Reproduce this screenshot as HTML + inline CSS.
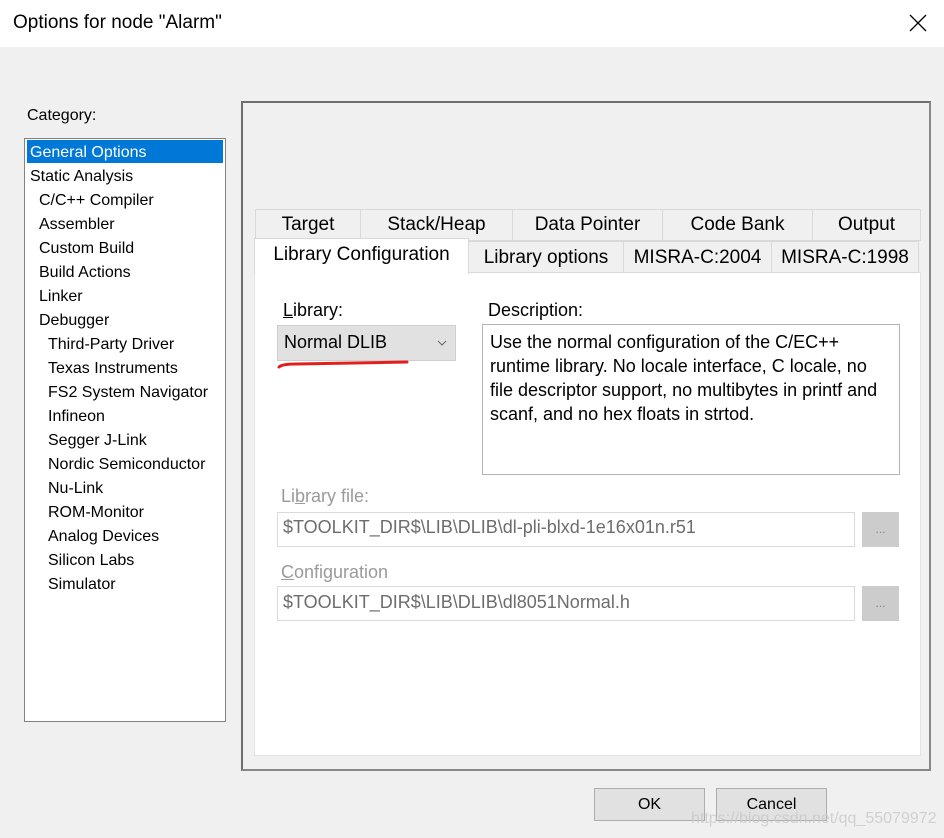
<!DOCTYPE html>
<html><head><meta charset="utf-8"><style>
*{margin:0;padding:0;box-sizing:border-box}
body{width:944px;height:838px;background:#f0f0f0;font-family:"Liberation Sans",sans-serif;position:relative;overflow:hidden;color:#000}
.a{position:absolute}
.t{font-size:18px}
.tab{position:absolute;background:#f0f0f0;border:1px solid #d9d9d9;font-size:19px;text-align:center;line-height:30px}
.li{position:absolute;font-size:16px;line-height:24px}
</style></head><body>
<div class="a" style="left:0;top:0;width:944px;height:47px;background:#fff"></div>
<div class="a" style="left:13px;top:12px;font-size:19px">Options for node "Alarm"</div>
<svg class="a" style="left:909px;top:14px" width="18" height="18"><path d="M1 1L17 17M17 1L1 17" stroke="#000" stroke-width="1.3"/></svg>
<div class="a" style="left:27px;top:107px;font-size:16px">Category:</div>
<div class="a" style="left:24px;top:138px;width:202px;height:584px;background:#fff;border:1px solid #828282"></div>
<div class="a" style="left:27px;top:140px;width:196px;height:23px;background:#0078d7"></div>
<div class="li" style="left:30px;top:141px;color:#fff">General Options</div>
<div class="li" style="left:30px;top:165px">Static Analysis</div>
<div class="li" style="left:39px;top:189px">C/C++ Compiler</div>
<div class="li" style="left:39px;top:213px">Assembler</div>
<div class="li" style="left:39px;top:237px">Custom Build</div>
<div class="li" style="left:39px;top:261px">Build Actions</div>
<div class="li" style="left:39px;top:285px">Linker</div>
<div class="li" style="left:39px;top:309px">Debugger</div>
<div class="li" style="left:48px;top:333px">Third-Party Driver</div>
<div class="li" style="left:48px;top:357px">Texas Instruments</div>
<div class="li" style="left:48px;top:381px">FS2 System Navigator</div>
<div class="li" style="left:48px;top:405px">Infineon</div>
<div class="li" style="left:48px;top:429px">Segger J-Link</div>
<div class="li" style="left:48px;top:453px">Nordic Semiconductor</div>
<div class="li" style="left:48px;top:477px">Nu-Link</div>
<div class="li" style="left:48px;top:501px">ROM-Monitor</div>
<div class="li" style="left:48px;top:525px">Analog Devices</div>
<div class="li" style="left:48px;top:549px">Silicon Labs</div>
<div class="li" style="left:48px;top:573px">Simulator</div>

<div class="a" style="left:241px;top:101px;width:690px;height:670px;border:2px solid #6e6e6e;border-right-color:#888;border-bottom-color:#888"></div>
<div class="a" style="left:254px;top:272px;width:667px;height:484px;background:#fff;border:1px solid #e3e3e3"></div>
<div class="tab" style="left:255px;top:209px;width:106px;height:32px">Target</div>
<div class="tab" style="left:360px;top:209px;width:153px;height:32px">Stack/Heap</div>
<div class="tab" style="left:512px;top:209px;width:151px;height:32px">Data Pointer</div>
<div class="tab" style="left:662px;top:209px;width:151px;height:32px">Code Bank</div>
<div class="tab" style="left:812px;top:209px;width:109px;height:32px">Output</div>
<div class="tab" style="left:468px;top:241px;width:156px;height:32px;line-height:32px">Library options</div>
<div class="tab" style="left:623px;top:241px;width:149px;height:32px;line-height:32px">MISRA-C:2004</div>
<div class="tab" style="left:771px;top:241px;width:148px;height:32px;line-height:32px">MISRA-C:1998</div>
<div class="tab" style="left:254px;top:238px;width:215px;height:36px;background:#fff;border-bottom:none;line-height:32px">Library Configuration</div>

<div class="a t" style="left:283px;top:300px"><u>L</u>ibrary:</div>
<div class="a t" style="left:488px;top:300px">Description:</div>
<div class="a" style="left:277px;top:325px;width:179px;height:36px;background:#e1e1e1;border:1px solid #cfcfcf"></div>
<div class="a t" style="left:284px;top:332px">Normal DLIB</div>
<svg class="a" style="left:437px;top:339px" width="10" height="8"><path d="M1 2L5 6L9 2" stroke="#666" fill="none"/></svg>
<svg class="a" style="left:276px;top:358px" width="135" height="12"><path d="M3 9Q6 6 20 6L131 4" stroke="#e02020" stroke-width="3" fill="none" stroke-linecap="round"/></svg>
<div class="a" style="left:482px;top:324px;width:418px;height:151px;border:1px solid #b4b4b4;background:#fff"></div>
<div class="a t" style="left:490px;top:330px;width:392px;line-height:24px">Use the normal configuration of the C/EC++ runtime library. No locale interface, C locale, no file descriptor support, no multibytes in printf and scanf, and no hex floats in strtod.</div>

<div class="a t" style="left:281px;top:486px;color:#9a9a9a">Li<u>b</u>rary file:</div>
<div class="a" style="left:277px;top:512px;width:578px;height:35px;border:1px solid #dadada"></div>
<div class="a t" style="left:283px;top:517px;color:#6d6d6d">$TOOLKIT_DIR$\LIB\DLIB\dl-pli-blxd-1e16x01n.r51</div>
<div class="a" style="left:862px;top:512px;width:37px;height:35px;background:#cccccc;color:#888;font-size:12px;text-align:center;line-height:34px">...</div>
<div class="a t" style="left:281px;top:562px;color:#9a9a9a"><u>C</u>onfiguration</div>
<div class="a" style="left:277px;top:586px;width:578px;height:35px;border:1px solid #dadada"></div>
<div class="a t" style="left:283px;top:592px;color:#6d6d6d">$TOOLKIT_DIR$\LIB\DLIB\dl8051Normal.h</div>
<div class="a" style="left:862px;top:586px;width:37px;height:35px;background:#cccccc;color:#888;font-size:12px;text-align:center;line-height:34px">...</div>

<div class="a" style="left:594px;top:788px;width:111px;height:33px;background:#e1e1e1;border:1px solid #adadad;font-size:16px;text-align:center;line-height:31px">OK</div>
<div class="a" style="left:716px;top:788px;width:111px;height:33px;background:#e1e1e1;border:1px solid #adadad;font-size:16px;text-align:center;line-height:31px">Cancel</div>
<div class="a" style="left:691px;top:810px;font-size:16px;color:rgba(200,200,200,0.8)">https://blog.csdn.net/qq_55079972</div>
</body></html>
